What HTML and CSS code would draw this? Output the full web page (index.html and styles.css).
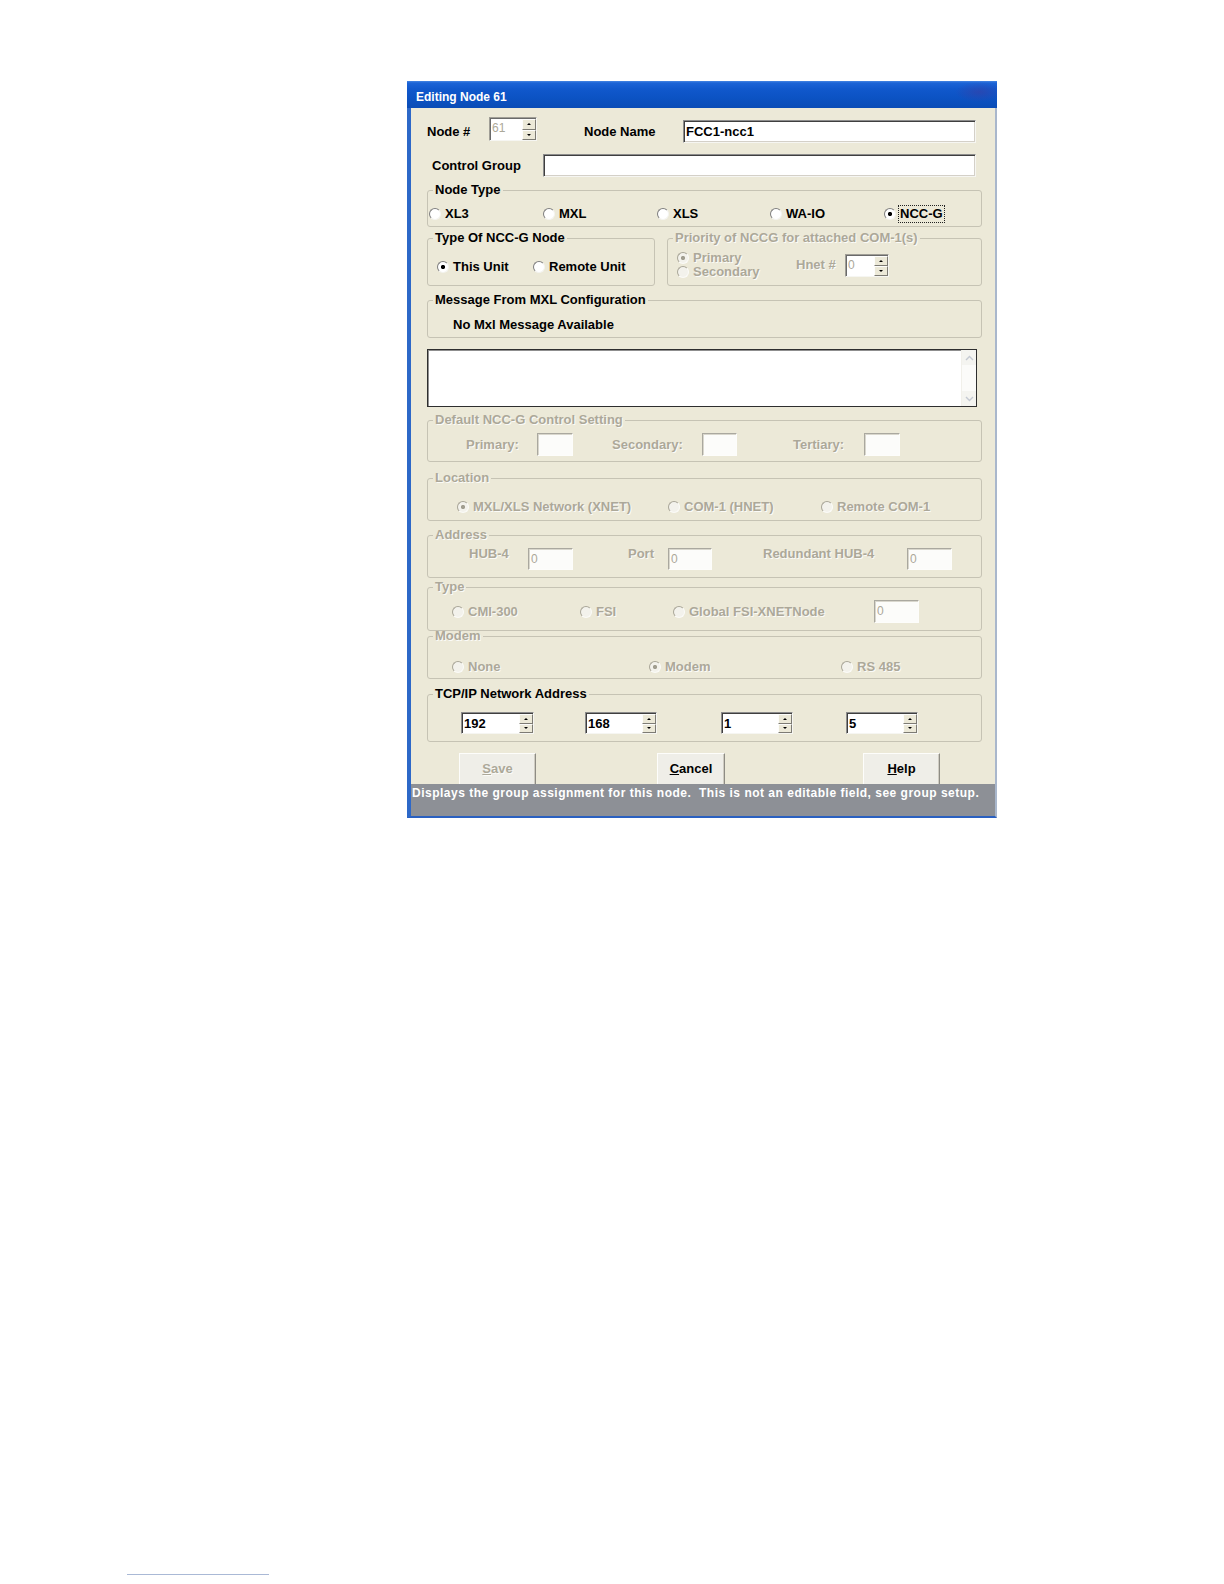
FILE: index.html
```html
<!DOCTYPE html>
<html lang="en">
<head>
<meta charset="utf-8">
<title>Editing Node 61</title>
<link rel="stylesheet" href="styles.css">
</head>
<body>
<div class="window">
  <div class="titlebar">Editing Node 61</div>
  <div class="frame">
    <div class="content">
      <div class="row1">
        <span class="lbl l-node">Node #</span>
        <div class="spin spin-node disabled">
          <span class="spin-val">61</span>
          <span class="spin-btns"><span class="sb up"></span><span class="sb down"></span></span>
        </div>
        <span class="lbl l-name">Node Name</span>
        <div class="field in-name">FCC1-ncc1</div>
      </div>

      <div class="row2">
        <span class="lbl l-group">Control Group</span>
        <div class="field in-group"></div>
      </div>

      <fieldset class="grp g-nodetype">
        <legend>Node Type</legend>
        <div class="gbody opts">
          <div class="opt"><span class="radio"></span>XL3</div>
          <div class="opt"><span class="radio"></span>MXL</div>
          <div class="opt"><span class="radio"></span>XLS</div>
          <div class="opt"><span class="radio"></span>WA-IO</div>
          <div class="opt"><span class="radio on"></span><span class="focus">NCC-G</span></div>
        </div>
      </fieldset>

      <div class="pair">
        <fieldset class="grp g-ncc">
          <legend>Type Of NCC-G Node</legend>
          <div class="gbody opts">
            <div class="opt"><span class="radio on"></span>This Unit</div>
            <div class="opt"><span class="radio"></span>Remote Unit</div>
          </div>
        </fieldset>
        <fieldset class="grp g-prio dis">
          <legend>Priority of NCCG for attached COM-1(s)</legend>
          <div class="gbody prio-row">
            <div class="prio-col">
              <div class="opt"><span class="radio on"></span>Primary</div>
              <div class="opt"><span class="radio"></span>Secondary</div>
            </div>
            <span class="lbl l-hnet">Hnet #</span>
            <div class="spin spin-hnet disabled">
              <span class="spin-val">0</span>
              <span class="spin-btns"><span class="sb up"></span><span class="sb down"></span></span>
            </div>
          </div>
        </fieldset>
      </div>

      <fieldset class="grp g-msg">
        <legend>Message From MXL Configuration</legend>
        <div class="gbody msg">No Mxl Message Available</div>
      </fieldset>

      <div class="memo">
        <div class="sbar">
          <span class="sarrow"><svg width="9" height="6" viewBox="0 0 9 6"><polyline points="1,5 4.5,1.5 8,5" fill="none" stroke="#c4c9d2" stroke-width="1.4"/></svg></span>
          <span class="sarrow"><svg width="9" height="6" viewBox="0 0 9 6"><polyline points="1,1 4.5,4.5 8,1" fill="none" stroke="#c4c9d2" stroke-width="1.4"/></svg></span>
        </div>
      </div>

      <fieldset class="grp g-default dis">
        <legend>Default NCC-G Control Setting</legend>
        <div class="gbody def-row">
          <span class="lbl l-pri">Primary:</span>
          <div class="field dfield b-pri"></div>
          <span class="lbl l-sec">Secondary:</span>
          <div class="field dfield b-sec"></div>
          <span class="lbl l-ter">Tertiary:</span>
          <div class="field dfield b-ter"></div>
        </div>
      </fieldset>

      <fieldset class="grp g-loc dis">
        <legend>Location</legend>
        <div class="gbody opts">
          <div class="opt"><span class="radio on"></span>MXL/XLS Network (XNET)</div>
          <div class="opt"><span class="radio"></span>COM-1 (HNET)</div>
          <div class="opt"><span class="radio"></span>Remote COM-1</div>
        </div>
      </fieldset>

      <fieldset class="grp g-addr dis">
        <legend>Address</legend>
        <div class="gbody addr-row">
          <span class="lbl l-hub">HUB-4</span>
          <div class="field dfield b-hub">0</div>
          <span class="lbl l-port">Port</span>
          <div class="field dfield b-port">0</div>
          <span class="lbl l-red">Redundant HUB-4</span>
          <div class="field dfield b-red">0</div>
        </div>
      </fieldset>

      <fieldset class="grp g-type dis">
        <legend>Type</legend>
        <div class="gbody opts">
          <div class="opt"><span class="radio"></span>CMI-300</div>
          <div class="opt"><span class="radio"></span>FSI</div>
          <div class="opt"><span class="radio"></span>Global FSI-XNETNode</div>
          <div class="field dfield b-glob">0</div>
        </div>
      </fieldset>

      <fieldset class="grp g-modem dis">
        <legend>Modem</legend>
        <div class="gbody opts">
          <div class="opt"><span class="radio"></span>None</div>
          <div class="opt"><span class="radio on"></span>Modem</div>
          <div class="opt"><span class="radio"></span>RS 485</div>
        </div>
      </fieldset>

      <fieldset class="grp g-tcp">
        <legend>TCP/IP Network Address</legend>
        <div class="gbody tcp-row">
          <div class="spin ip ip1"><span class="spin-val">192</span><span class="spin-btns"><span class="sb up"></span><span class="sb down"></span></span></div>
          <div class="spin ip ip2"><span class="spin-val">168</span><span class="spin-btns"><span class="sb up"></span><span class="sb down"></span></span></div>
          <div class="spin ip ip3"><span class="spin-val">1</span><span class="spin-btns"><span class="sb up"></span><span class="sb down"></span></span></div>
          <div class="spin ip ip4"><span class="spin-val">5</span><span class="spin-btns"><span class="sb up"></span><span class="sb down"></span></span></div>
        </div>
      </fieldset>

      <div class="btns">
        <div class="btn b-save disabled"><u>S</u>ave</div>
        <div class="btn b-cancel"><u>C</u>ancel</div>
        <div class="btn b-help"><u>H</u>elp</div>
      </div>
    </div>
    <div class="status">Displays the group assignment for this node.  This is not an editable field, see group setup.</div>
  </div>
</div>
<div class="footline"></div>
</body>
</html>
```

FILE: styles.css
```css
* { box-sizing: border-box; }

body {
  margin: 0;
  background: #ffffff;
  font-family: "Liberation Sans", Arial, sans-serif;
  color: #000;
}

.window {
  margin: 81px 0 0 407px;
  width: 590px;
}

.titlebar {
  height: 27px;
  padding: 9px 0 0 9px;
  font-weight: bold;
  font-size: 12px;
  line-height: 15px;
  color: #fff;
  background:
    radial-gradient(ellipse 24px 10px at 572px 11px, rgba(60, 60, 160, 0.55), rgba(60, 60, 160, 0)),
    linear-gradient(#4585e2 0, #1b63d6 2px, #1058cc 8px, #0c53c4 60%, #0a4cb6 100%);
}

.frame {
  background: #ece9d8;
  border-left: 4px solid #2d68c8;
  border-right: 2px solid #a9b7cc;
  border-bottom: 2px solid #2a60c0;
}

.content {
  padding: 9px 13px 0 16px;
}

.lbl {
  flex: none;
  font-weight: bold;
  font-size: 13px;
  line-height: 14px;
  white-space: nowrap;
}

/* sunken text fields */
.field {
  flex: none;
  background: #fff;
  border: 1px solid;
  border-color: #8c8c8c #f6f6f2 #f6f6f2 #8c8c8c;
  box-shadow: inset 1px 1px 0 #3f3f3f, inset -1px -1px 0 #d4d0c8;
  font-weight: bold;
  font-size: 13px;
  line-height: 21px;
  padding-left: 2px;
  white-space: nowrap;
}

.dfield {
  border-color: #aaa89f #fdfdfb #fdfdfb #aaa89f;
  box-shadow: inset 1px 1px 0 #d9d7cd;
  background: #fcfcfa;
  color: #aca899;
  font-weight: normal;
  font-size: 12px;
  line-height: 20px;
}

/* spin boxes */
.spin {
  flex: none;
  display: flex;
  background: #fff;
  border: 1px solid;
  border-color: #8c8c8c #f6f6f2 #f6f6f2 #8c8c8c;
  box-shadow: inset 1px 1px 0 #3f3f3f;
  padding: 1px 0 0 1px;
}

.spin-val {
  flex: 1;
  padding-left: 1px;
  font-weight: bold;
  font-size: 13px;
  line-height: 19px;
}

.spin.disabled .spin-val {
  color: #aca899;
  font-weight: normal;
  font-size: 12px;
}

.spin.disabled {
  border-color: #a09e96 #f6f6f2 #f6f6f2 #a09e96;
  box-shadow: inset 1px 1px 0 #6a6a6a;
}

.spin-btns {
  flex: none;
  width: 14px;
  display: flex;
  flex-direction: column;
}

.sb {
  flex: 1;
  display: flex;
  align-items: center;
  justify-content: center;
  background: #ece9d8;
  border: 1px solid;
  border-color: #fdfdfb #7d7b74 #7d7b74 #fdfdfb;
}

.sb::before {
  content: "";
  width: 0;
  height: 0;
  border-left: 2px solid transparent;
  border-right: 2px solid transparent;
}

.sb.up::before { border-bottom: 2px solid #000; }
.sb.down::before { border-top: 2px solid #000; }

/* row 1 */
.row1 {
  display: flex;
  align-items: center;
  height: 26px;
}

.row1 .lbl { margin-top: 4px; }
.l-node { width: 62px; }
.spin-node { width: 48px; height: 24px; align-self: flex-start; }
.l-name { width: 99px; margin-left: 47px; }
.in-name { width: 293px; height: 23px; align-self: flex-end; }

/* row 2 */
.row2 {
  display: flex;
  align-items: center;
  margin-top: 11px;
  height: 23px;
}

.l-group { width: 116px; padding-left: 5px; }
.in-group { width: 433px; height: 23px; }

/* group boxes */
.grp {
  margin: 0;
  padding: 0;
  min-width: 0;
  border: 1px solid #c6c3b4;
  border-radius: 3px;
}

.grp legend {
  margin-left: 5px;
  padding: 0 2px;
  font-weight: bold;
  font-size: 13px;
  line-height: 14px;
  white-space: nowrap;
}

.dis, .dis legend, .dis .lbl { color: #aca899; }
.dis legend, .dis .lbl, .dis .opt { text-shadow: 1px 1px 0 #fbfbf8; }

/* radio options */
.opts {
  display: grid;
  align-items: center;
}

.opt {
  display: flex;
  align-items: center;
  font-weight: bold;
  font-size: 13px;
  line-height: 14px;
  white-space: nowrap;
}

.radio {
  flex: none;
  width: 12px;
  height: 12px;
  margin-right: 4px;
  border-radius: 50%;
  border: 1px solid;
  border-color: #7e7e7e #f4f4f0 #f4f4f0 #7e7e7e;
  background: #fff;
}

.radio.on {
  background: radial-gradient(circle, #000 0, #000 1.8px, #fff 2.4px);
}

.dis .radio {
  border-color: #a9a698 #fbfbf8 #fbfbf8 #a9a698;
  background: #f3f2ec;
}

.dis .radio.on {
  background: radial-gradient(circle, #a19e90 0, #a19e90 1.8px, #f3f2ec 2.4px);
}

.focus {
  border: 1px dotted #222;
  padding: 1px 1px;
  margin-left: -2px;
  line-height: 14px;
}

.g-nodetype { margin-top: 6px; }
.g-nodetype .gbody {
  padding: 8px 0 5px 1px;
  height: 29px;
  grid-template-columns: 114px 114px 113px 114px auto;
}

.pair {
  display: flex;
  gap: 12px;
  margin-top: 4px;
}

.g-ncc { width: 228px; flex: none; }
.g-ncc .gbody {
  padding: 14px 0 10px 9px;
  height: 40px;
  grid-template-columns: 96px auto;
}

.g-prio { flex: 1; }
.prio-row {
  display: flex;
  align-items: center;
  padding: 5px 0 5px 9px;
  height: 40px;
}

.prio-col {
  width: 119px;
  flex: none;
}

.l-hnet { width: 49px; }
.spin-hnet { width: 44px; height: 23px; }

.g-msg { margin-top: 7px; }
.msg {
  padding: 11px 0 5px 25px;
  font-weight: bold;
  font-size: 13px;
  line-height: 14px;
}

/* memo box */
.memo {
  margin-top: 11px;
  width: 550px;
  height: 58px;
  background: #fff;
  border: 1px solid #2e2e2e;
  box-shadow: inset 1px 1px 0 #8f8f8f;
  display: flex;
  justify-content: flex-end;
}

.sbar {
  width: 15px;
  display: flex;
  flex-direction: column;
  justify-content: space-between;
  background: #fbfbf9;
  border-left: 1px solid #f1f0ea;
}

.sarrow {
  height: 15px;
  display: flex;
  align-items: center;
  justify-content: center;
  background: #f4f4f0;
}

/* default control setting */
.g-default { margin-top: 6px; }
.def-row {
  display: flex;
  align-items: center;
  padding: 6px 0 5px 38px;
  height: 34px;
}

.l-pri { width: 71px; }
.b-pri { width: 36px; height: 23px; }
.l-sec { width: 90px; margin-left: 39px; }
.b-sec { width: 35px; height: 23px; }
.l-ter { width: 71px; margin-left: 56px; }
.b-ter { width: 36px; height: 23px; }

/* location */
.g-loc { margin-top: 9px; }
.g-loc .gbody {
  padding: 14px 0 5px 29px;
  height: 35px;
  grid-template-columns: 211px 153px auto;
}

/* address */
.g-addr { margin-top: 7px; }
.addr-row {
  display: flex;
  align-items: flex-start;
  padding: 6px 0 7px 41px;
  height: 35px;
}

.addr-row .lbl { margin-top: -1px; }
.l-hub { width: 59px; }
.b-hub { width: 45px; height: 22px; }
.l-port { width: 40px; margin-left: 55px; }
.b-port { width: 44px; height: 22px; }
.l-red { width: 144px; margin-left: 51px; }
.b-red { width: 45px; height: 22px; }

/* type */
.g-type { margin-top: 2px; }
.g-type .gbody {
  padding: 6px 0 7px 24px;
  height: 36px;
  grid-template-columns: 128px 93px 201px 45px;
}

.b-glob { width: 45px; height: 23px; }

/* modem */
.g-modem { margin-top: -2px; }
.g-modem .gbody {
  padding: 16px 0 3px 24px;
  height: 35px;
  grid-template-columns: 197px 192px auto;
}

/* tcp/ip */
.g-tcp { margin-top: 8px; }
.tcp-row {
  display: flex;
  padding: 11px 0 7px 33px;
  height: 40px;
}

.ip { height: 22px; width: 72px; }
.ip1 { width: 73px; }
.ip2 { margin-left: 51px; }
.ip3 { margin-left: 64px; }
.ip4 { margin-left: 53px; }

/* buttons */
.btns {
  display: flex;
  margin-top: 11px;
  height: 31px;
  overflow: hidden;
  padding-left: 32px;
}

.btn {
  flex: none;
  height: 36px;
  padding-top: 8px;
  text-align: center;
  font-weight: bold;
  font-size: 13px;
  line-height: 14px;
  background: #efeee8;
  border: 1px solid;
  border-color: #fdfdfb #8e8c84 #8e8c84 #fdfdfb;
  box-shadow: inset -1px 0 0 #cfccc2;
}

.btn.disabled { color: #aca899; text-shadow: 1px 1px 0 #fbfbf8; }
.b-save { width: 77px; }
.b-cancel { width: 68px; margin-left: 121px; }
.b-help { width: 77px; margin-left: 138px; }

/* status bar */
.status {
  height: 32px;
  background: #8d9096;
  color: #fff;
  font-weight: bold;
  font-size: 12px;
  line-height: 14px;
  letter-spacing: 0.5px;
  padding: 2px 0 0 1px;
  white-space: pre;
}

.footline {
  margin: 756px 0 0 127px;
  width: 142px;
  height: 1px;
  background: #aab9d6;
}
```
